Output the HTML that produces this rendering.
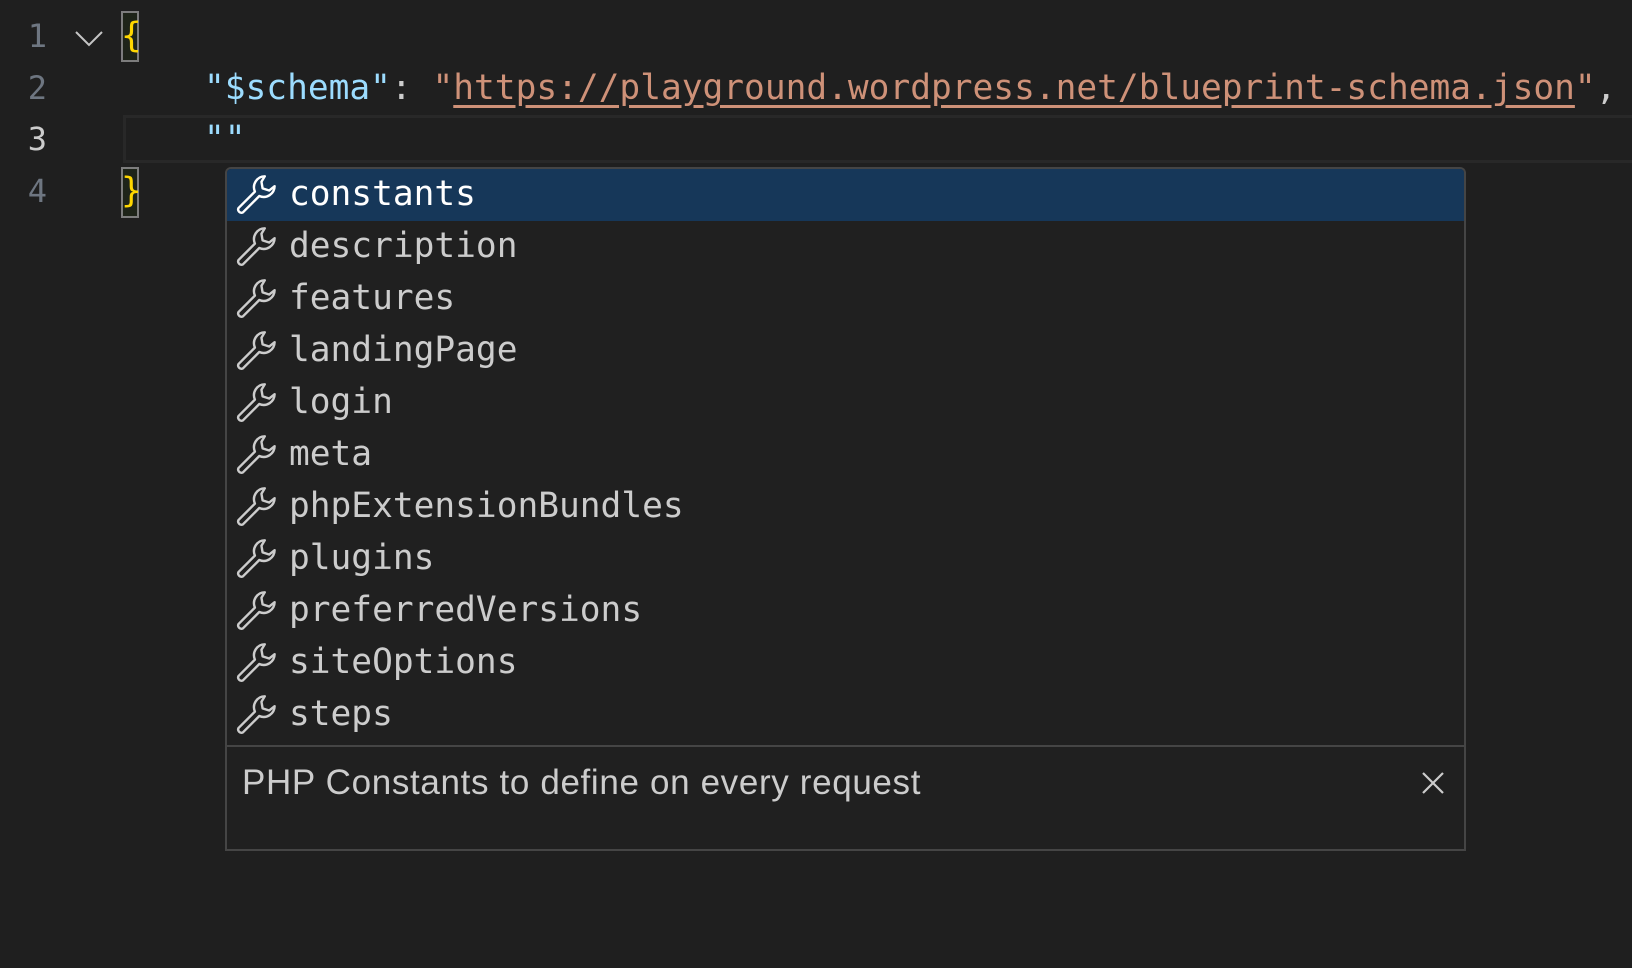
<!DOCTYPE html>
<html><head><meta charset="utf-8"><style>
html,body{margin:0;padding:0;background:#1f1f1f;width:1632px;height:968px;overflow:hidden}
.m{font-family:"DejaVu Sans Mono","Liberation Mono",monospace;font-size:34.5px;position:absolute;white-space:pre;line-height:52px}
.ln{position:absolute;left:0;width:47px;text-align:right;color:#6e7681;font-family:"DejaVu Sans Mono","Liberation Mono",monospace;font-size:32px;line-height:52px}
.cur{position:absolute;left:123px;right:0;top:115px;height:48px;border:3px solid #282828;border-right:none;box-sizing:border-box}
.br{position:absolute;left:121px;width:18px;height:51px;border:2px solid #7d7d7d;box-sizing:border-box;background:#1e2419}
.sw{position:absolute;left:225px;top:167px;width:1241px;height:578px;border:2px solid #454545;border-bottom:none;border-radius:6px 6px 0 0;box-sizing:border-box;background:#202020;overflow:hidden}
.row{position:absolute;left:0;right:0;height:52px;color:#cccccc}
.row.sel{background:#163759;color:#fff}
.row svg{position:absolute;left:6px;top:5px}
.row span{position:absolute;left:62px;top:0;font-family:"DejaVu Sans Mono","Liberation Mono",monospace;font-size:34.5px;line-height:50px}
.det{position:absolute;left:225px;top:745px;width:1241px;height:106px;border:2px solid #454545;box-sizing:border-box;background:#202020}
.det .t{position:absolute;left:15px;top:16px;font-family:"Liberation Sans",sans-serif;font-size:35px;letter-spacing:0.65px;color:#cccccc;line-height:40px}
</style></head><body>
<div class="cur"></div>
<div class="ln" style="top:10px">1</div>
<div class="ln" style="top:62px">2</div>
<div class="ln" style="top:113px;color:#cccccc">3</div>
<div class="ln" style="top:165px">4</div>
<svg style="position:absolute;left:74px;top:28px" width="30" height="20" viewBox="0 0 30 20"><path d="M2 4 L15 17 L28 4" fill="none" stroke="#c5c5c5" stroke-width="2"/></svg>
<div class="br" style="top:11px"></div>
<div class="br" style="top:167px"></div>
<div class="m" style="left:121px;top:10px;color:#ffd700">{</div>
<div class="m" style="left:121px;top:165px;color:#ffd700">}</div>
<div class="m" style="left:204px;top:62px;color:#cccccc"><span style="color:#9cdcfe">"$schema"</span>: <span style="color:#ce9178">"<span style="text-decoration:underline;text-underline-offset:6px">https://playground.wordpress.net/blueprint-schema.json</span>"</span>,</div>
<div class="m" style="left:204px;top:113px;color:#9cdcfe">""</div>
<div class="sw">
<div class="row sel" style="top:0"><svg width="46" height="44" viewBox="0 0 42 40"><path d="M29 2 a10 10 0 0 0 -9 14 L5 31 a3 3 0 0 0 4 4 L24 20 a10 10 0 0 0 14 -9 L33 15 L27 13 L26 7 Z" fill="none" stroke="currentColor" stroke-width="2.2" stroke-linejoin="round"/></svg><span>constants</span></div>
<div class="row" style="top:52px"><svg width="46" height="44" viewBox="0 0 42 40"><path d="M29 2 a10 10 0 0 0 -9 14 L5 31 a3 3 0 0 0 4 4 L24 20 a10 10 0 0 0 14 -9 L33 15 L27 13 L26 7 Z" fill="none" stroke="currentColor" stroke-width="2.2" stroke-linejoin="round"/></svg><span>description</span></div>
<div class="row" style="top:104px"><svg width="46" height="44" viewBox="0 0 42 40"><path d="M29 2 a10 10 0 0 0 -9 14 L5 31 a3 3 0 0 0 4 4 L24 20 a10 10 0 0 0 14 -9 L33 15 L27 13 L26 7 Z" fill="none" stroke="currentColor" stroke-width="2.2" stroke-linejoin="round"/></svg><span>features</span></div>
<div class="row" style="top:156px"><svg width="46" height="44" viewBox="0 0 42 40"><path d="M29 2 a10 10 0 0 0 -9 14 L5 31 a3 3 0 0 0 4 4 L24 20 a10 10 0 0 0 14 -9 L33 15 L27 13 L26 7 Z" fill="none" stroke="currentColor" stroke-width="2.2" stroke-linejoin="round"/></svg><span>landingPage</span></div>
<div class="row" style="top:208px"><svg width="46" height="44" viewBox="0 0 42 40"><path d="M29 2 a10 10 0 0 0 -9 14 L5 31 a3 3 0 0 0 4 4 L24 20 a10 10 0 0 0 14 -9 L33 15 L27 13 L26 7 Z" fill="none" stroke="currentColor" stroke-width="2.2" stroke-linejoin="round"/></svg><span>login</span></div>
<div class="row" style="top:260px"><svg width="46" height="44" viewBox="0 0 42 40"><path d="M29 2 a10 10 0 0 0 -9 14 L5 31 a3 3 0 0 0 4 4 L24 20 a10 10 0 0 0 14 -9 L33 15 L27 13 L26 7 Z" fill="none" stroke="currentColor" stroke-width="2.2" stroke-linejoin="round"/></svg><span>meta</span></div>
<div class="row" style="top:312px"><svg width="46" height="44" viewBox="0 0 42 40"><path d="M29 2 a10 10 0 0 0 -9 14 L5 31 a3 3 0 0 0 4 4 L24 20 a10 10 0 0 0 14 -9 L33 15 L27 13 L26 7 Z" fill="none" stroke="currentColor" stroke-width="2.2" stroke-linejoin="round"/></svg><span>phpExtensionBundles</span></div>
<div class="row" style="top:364px"><svg width="46" height="44" viewBox="0 0 42 40"><path d="M29 2 a10 10 0 0 0 -9 14 L5 31 a3 3 0 0 0 4 4 L24 20 a10 10 0 0 0 14 -9 L33 15 L27 13 L26 7 Z" fill="none" stroke="currentColor" stroke-width="2.2" stroke-linejoin="round"/></svg><span>plugins</span></div>
<div class="row" style="top:416px"><svg width="46" height="44" viewBox="0 0 42 40"><path d="M29 2 a10 10 0 0 0 -9 14 L5 31 a3 3 0 0 0 4 4 L24 20 a10 10 0 0 0 14 -9 L33 15 L27 13 L26 7 Z" fill="none" stroke="currentColor" stroke-width="2.2" stroke-linejoin="round"/></svg><span>preferredVersions</span></div>
<div class="row" style="top:468px"><svg width="46" height="44" viewBox="0 0 42 40"><path d="M29 2 a10 10 0 0 0 -9 14 L5 31 a3 3 0 0 0 4 4 L24 20 a10 10 0 0 0 14 -9 L33 15 L27 13 L26 7 Z" fill="none" stroke="currentColor" stroke-width="2.2" stroke-linejoin="round"/></svg><span>siteOptions</span></div>
<div class="row" style="top:520px"><svg width="46" height="44" viewBox="0 0 42 40"><path d="M29 2 a10 10 0 0 0 -9 14 L5 31 a3 3 0 0 0 4 4 L24 20 a10 10 0 0 0 14 -9 L33 15 L27 13 L26 7 Z" fill="none" stroke="currentColor" stroke-width="2.2" stroke-linejoin="round"/></svg><span>steps</span></div>
</div>
<div class="det"><div class="t">PHP Constants to define on every request</div>
<svg style="position:absolute;left:1194px;top:24px" width="24" height="24" viewBox="0 0 24 24"><path d="M2 2 L22 22 M22 2 L2 22" stroke="#cccccc" stroke-width="2.2"/></svg></div>
</body></html>
